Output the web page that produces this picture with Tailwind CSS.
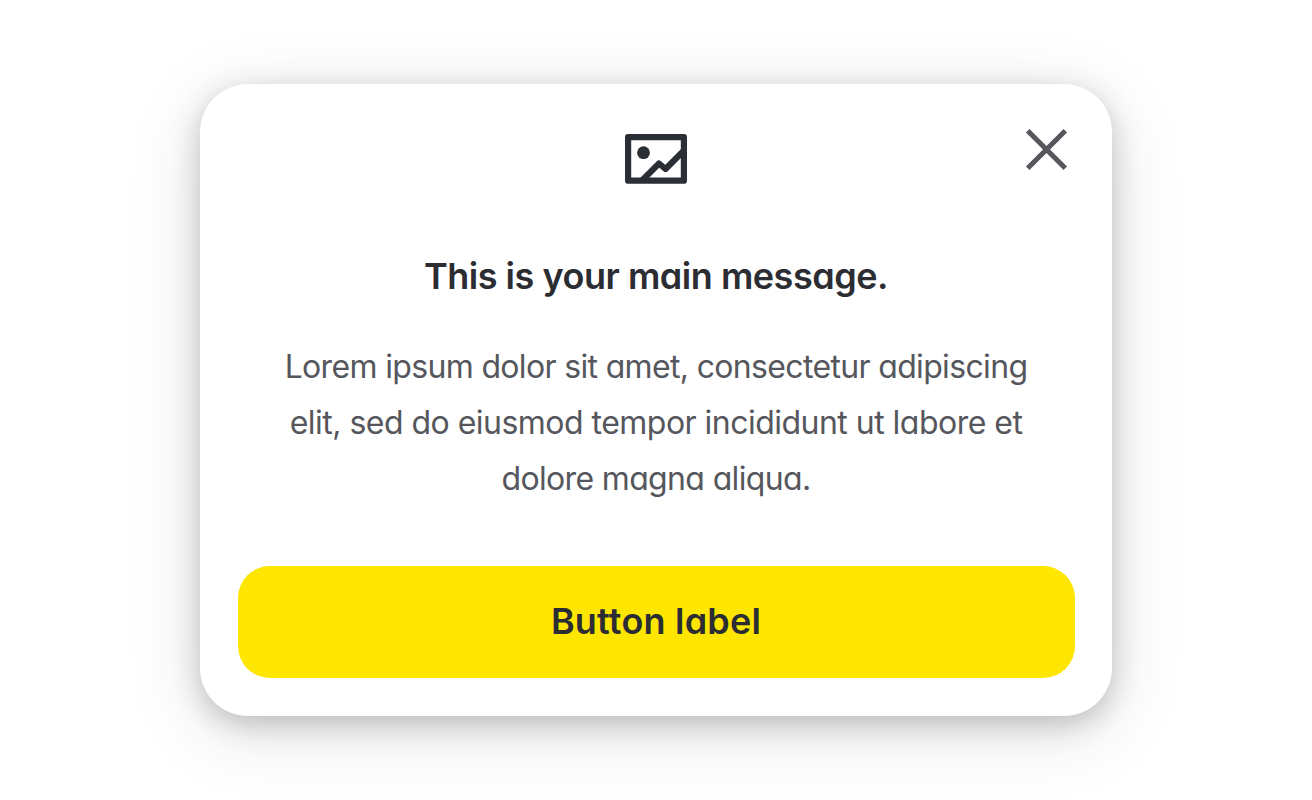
<!DOCTYPE html>
<html lang="en">
<head>
    <meta charset="UTF-8">
    <meta name="viewport" content="width=device-width, initial-scale=1.0">
    <title>Main message</title>
    <script src="https://cdn.jsdelivr.net/npm/@tailwindcss/browser@4"></script>
</head>
<body class="bg-white flex items-center justify-center h-screen overflow-hidden font-[Inter,'Noto_Sans',sans-serif] [font-feature-settings:'cv11']">

    <div class="relative w-[912px] h-[632px] px-[37.5px] pt-12 bg-white rounded-[48px] shadow-[0_8px_28px_rgba(43,45,51,0.25),0_16px_76px_rgba(43,45,51,0.13)] flex flex-col text-center text-[#2b2d33]">

        <!-- Close -->
        <button class="absolute top-[44px] right-[44px]" aria-label="Close">
            <svg class="block w-[43px] h-[43px]" viewBox="0 0 43 43" fill="none" stroke="#55575d" stroke-width="5">
                <path d="M2.7 2.7L40.3 40.3M40.3 2.7L2.7 40.3"/>
            </svg>
        </button>

        <!-- Picture icon -->
        <svg class="block w-16 h-[54px] mx-auto shrink-0" viewBox="0 0 64 54" fill="none" stroke="#2a2e35" stroke-width="6.2" stroke-linejoin="round">
            <rect x="4.1" y="5.1" width="55.8" height="43.6"/>
            <circle cx="19.5" cy="20.7" r="6.4" fill="#2a2e35" stroke="none"/>
            <path d="M18 48.5L35 31.5L41.5 37L60 18.5"/>
        </svg>

        <h2 class="mt-[62px] h-14 text-[36px] leading-14 font-[580] tracking-[-0.48px] whitespace-nowrap">This is your main message.</h2>

        <!-- Message -->
        <p class="mt-[35px] text-[32px] leading-14 text-[#55575d] whitespace-nowrap">
            <span class="tracking-[-0.66px]">Lorem ipsum dolor sit amet, consectetur adipiscing</span><br>
            <span class="tracking-[-0.52px]">elit, sed do eiusmod tempor incididunt ut labore et</span><br>
            <span class="tracking-[-0.65px]">dolore magna aliqua.</span>
        </p>

        <button class="mt-[59px] pb-0.5 w-full h-28 shrink-0 bg-[#ffe600] rounded-[32px] text-[36px] font-[580] tracking-[0.2px]">Button label</button>
    </div>

</body>
</html>
